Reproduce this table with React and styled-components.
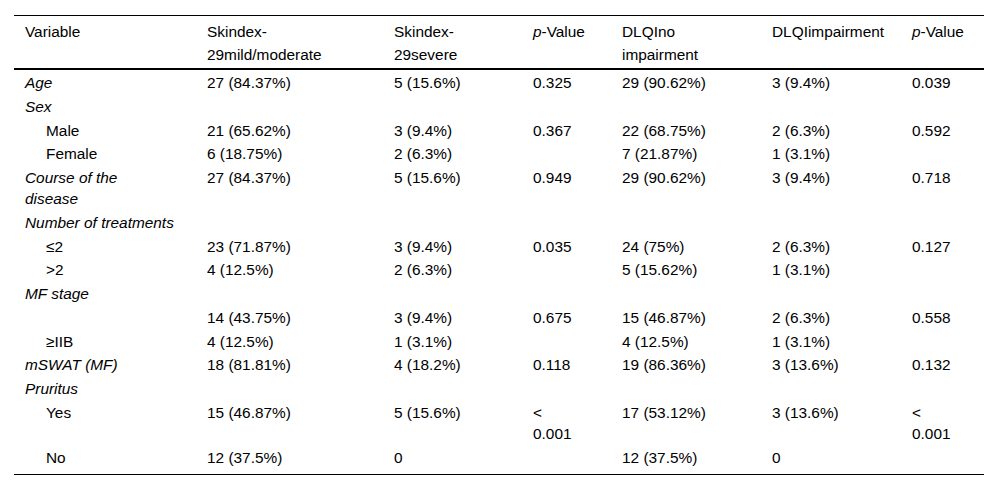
import React from "react";
import styled, { createGlobalStyle } from "styled-components";

const Global = createGlobalStyle`
  html, body { margin: 0; padding: 0; background: #ffffff; }
  body { font-family: "Liberation Sans", Arial, Helvetica, sans-serif; color: #000; }
`;

const Page = styled.div`
  padding: 15px 16px 0 14px;
  width: 970px;
`;

const Table = styled.table`
  width: 970px;
  border-collapse: collapse;
  table-layout: fixed;
  font-size: 15.4px;
  border-top: 1px solid #000;
  border-bottom: 1px solid #000;
`;

const HeadRow = styled.tr`
  border-bottom: 2px solid #000;
`;

const HeadCell = styled.th`
  text-align: left;
  font-weight: normal;
  vertical-align: top;
  line-height: 23px;
  padding: 4px 6px 2px 11px;
`;

const Row = styled.tr``;

const Cell = styled.td`
  vertical-align: top;
  line-height: 21px;
  padding: 2px 6px ${(p) => (p.$last ? "6px" : "0.75px")} ${(p) => (p.$indent ? "32px" : "11px")};
  font-style: ${(p) => (p.$italic ? "italic" : "normal")};
`;

const Em = styled.i`
  font-style: italic;
`;

const widths = [182, 187, 139, 89, 150, 140, 83];

const rows = [
  { label: "Age", italic: true, cells: ["27 (84.37%)", "5 (15.6%)", "0.325", "29 (90.62%)", "3 (9.4%)", "0.039"] },
  { label: "Sex", italic: true, cells: ["", "", "", "", "", ""] },
  { label: "Male", indent: true, cells: ["21 (65.62%)", "3 (9.4%)", "0.367", "22 (68.75%)", "2 (6.3%)", "0.592"] },
  { label: "Female", indent: true, cells: ["6 (18.75%)", "2 (6.3%)", "", "7 (21.87%)", "1 (3.1%)", ""] },
  { label: ["Course of the", "disease"], italic: true, cells: ["27 (84.37%)", "5 (15.6%)", "0.949", "29 (90.62%)", "3 (9.4%)", "0.718"] },
  { label: "Number of treatments", italic: true, cells: ["", "", "", "", "", ""] },
  { label: "≤2", indent: true, cells: ["23 (71.87%)", "3 (9.4%)", "0.035", "24 (75%)", "2 (6.3%)", "0.127"] },
  { label: ">2", indent: true, cells: ["4 (12.5%)", "2 (6.3%)", "", "5 (15.62%)", "1 (3.1%)", ""] },
  { label: "MF stage", italic: true, cells: ["", "", "", "", "", ""] },
  { label: "", indent: true, cells: ["14 (43.75%)", "3 (9.4%)", "0.675", "15 (46.87%)", "2 (6.3%)", "0.558"] },
  { label: "≥IIB", indent: true, cells: ["4 (12.5%)", "1 (3.1%)", "", "4 (12.5%)", "1 (3.1%)", ""] },
  { label: "mSWAT (MF)", italic: true, cells: ["18 (81.81%)", "4 (18.2%)", "0.118", "19 (86.36%)", "3 (13.6%)", "0.132"] },
  { label: "Pruritus", italic: true, cells: ["", "", "", "", "", ""] },
  { label: "Yes", indent: true, cells: ["15 (46.87%)", "5 (15.6%)", ["<", "0.001"], "17 (53.12%)", "3 (13.6%)", ["<", "0.001"]] },
  { label: "No", indent: true, cells: ["12 (37.5%)", "0", "", "12 (37.5%)", "0", ""] },
];

const Lines = ({ value }) =>
  Array.isArray(value)
    ? value.map((v, i) => (
        <React.Fragment key={i}>
          {i > 0 && <br />}
          {v}
        </React.Fragment>
      ))
    : value;

export default function App() {
  return (
    <Page>
      <Global />
      <Table>
        <colgroup>
          {widths.map((w, i) => (
            <col key={i} style={{ width: w }} />
          ))}
        </colgroup>
        <thead>
          <HeadRow>
            <HeadCell>Variable</HeadCell>
            <HeadCell>Skindex-<br />29mild/moderate</HeadCell>
            <HeadCell>Skindex-<br />29severe</HeadCell>
            <HeadCell><Em>p</Em>-Value</HeadCell>
            <HeadCell>DLQIno<br />impairment</HeadCell>
            <HeadCell>DLQIimpairment</HeadCell>
            <HeadCell><Em>p</Em>-Value</HeadCell>
          </HeadRow>
        </thead>
        <tbody>
          {rows.map((r, i) => {
            const last = i === rows.length - 1;
            return (
              <Row key={i}>
                <Cell $italic={r.italic} $indent={r.indent} $last={last}>
                  <Lines value={r.label} />
                </Cell>
                {r.cells.map((c, j) => (
                  <Cell key={j} $last={last}>
                    <Lines value={c} />
                  </Cell>
                ))}
              </Row>
            );
          })}
        </tbody>
      </Table>
    </Page>
  );
}
